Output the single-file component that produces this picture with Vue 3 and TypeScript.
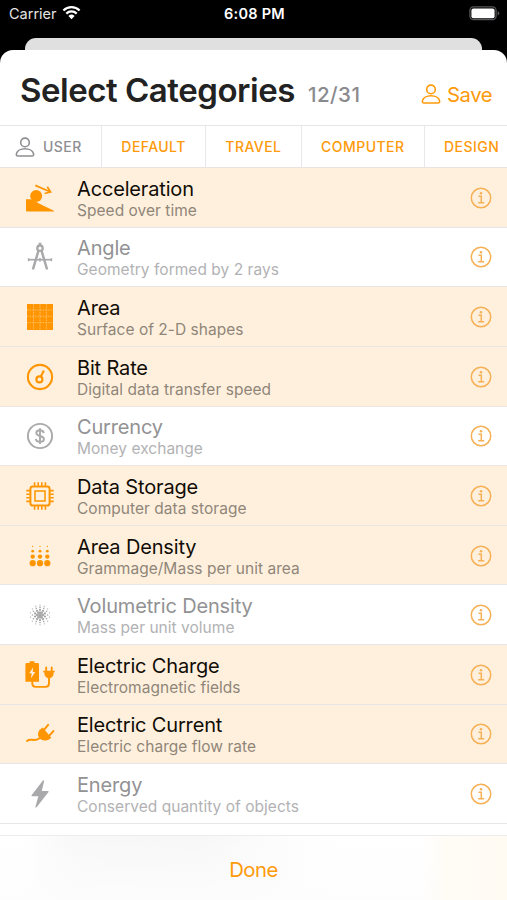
<script setup lang="ts">
interface Category {
  name: string
  detail: string
  icon: string
  selected: boolean
}

const categories: Category[] = [
  { name: 'Acceleration', detail: 'Speed over time', icon: 'acceleration', selected: true },
  { name: 'Angle', detail: 'Geometry formed by 2 rays', icon: 'angle', selected: false },
  { name: 'Area', detail: 'Surface of 2-D shapes', icon: 'area', selected: true },
  { name: 'Bit Rate', detail: 'Digital data transfer speed', icon: 'bitrate', selected: true },
  { name: 'Currency', detail: 'Money exchange', icon: 'currency', selected: false },
  { name: 'Data Storage', detail: 'Computer data storage', icon: 'chip', selected: true },
  { name: 'Area Density', detail: 'Grammage/Mass per unit area', icon: 'areadensity', selected: true },
  { name: 'Volumetric Density', detail: 'Mass per unit volume', icon: 'volumetric', selected: false },
  { name: 'Electric Charge', detail: 'Electromagnetic fields', icon: 'charge', selected: true },
  { name: 'Electric Current', detail: 'Electric charge flow rate', icon: 'current', selected: true },
  { name: 'Energy', detail: 'Conserved quantity of objects', icon: 'energy', selected: false },
]

const presets: string[] = ['DEFAULT', 'TRAVEL', 'COMPUTER', 'DESIGN']

interface Dot { x: number; y: number; r: number }

// Rings of dots that shrink away from the centre.
const cloud: Dot[] = [{ x: 16, y: 16, r: 1.9 }]
const rings = [
  { d: 2.8, n: 6, r: 1.45 },
  { d: 5.2, n: 10, r: 1.15 },
  { d: 7.6, n: 12, r: 0.8 },
  { d: 9.8, n: 14, r: 0.6 },
]
rings.forEach((ring, k) => {
  for (let i = 0; i < ring.n; i++) {
    const a = ((i + k * 0.5) / ring.n) * Math.PI * 2
    cloud.push({ x: 16 + Math.cos(a) * ring.d, y: 16 + Math.sin(a) * ring.d, r: ring.r })
  }
})

const columns = [8.7, 16, 23.3]
const levels = [
  { y: 6.4, r: 0.7 },
  { y: 11.2, r: 1.4 },
  { y: 16.6, r: 2.2 },
  { y: 23.2, r: 3.1 },
]
const pins = [10.6, 14.2, 17.8, 21.4]
</script>

<template>
  <div class="screen">
    <header class="status">
      <div class="carrier">
        <span>Carrier</span>
        <svg class="wifi" viewBox="0 0 19 15">
          <path d="M1.4 5.5a11.6 11.6 0 0 1 16.2 0" />
          <path d="M4.3 8.6a7.4 7.4 0 0 1 10.4 0" />
          <path class="solid" d="M6.4 11a4.5 4.5 0 0 1 6.2 0l-3.1 3.2z" />
        </svg>
      </div>
      <div class="clock">6:08 PM</div>
      <div class="power">
        <svg class="battery" viewBox="0 0 31 15">
          <rect x="0.9" y="0.9" width="26.2" height="12.8" rx="3.6" fill="none" stroke="#55555a" stroke-width="1.3" />
          <rect x="2.4" y="2.4" width="23.2" height="9.8" rx="2" fill="#fff" />
          <path d="M28.6 5v4.6q1.8-.7 1.8-2.3t-1.8-2.3z" fill="#55555a" />
        </svg>
      </div>
    </header>
    <div class="behind"></div>

    <main class="sheet">
      <div class="title-bar">
        <h1>Select Categories</h1>
        <span class="count">12/31</span>
        <button class="save">
          <svg class="person" viewBox="0 0 20 20">
            <circle cx="10" cy="5.4" r="4.3" />
            <path d="M3.2 19h13.6q2.2 0 1.8-2.1c-.7-3-4.3-5.1-8.6-5.1s-7.9 2.1-8.6 5.1q-.4 2.1 1.8 2.1z" />
          </svg>
          <span>Save</span>
        </button>
      </div>

      <nav class="tabs">
        <button class="tab user">
          <svg class="person" viewBox="0 0 20 20">
            <circle cx="10" cy="5.4" r="4.3" />
            <path d="M3.2 19h13.6q2.2 0 1.8-2.1c-.7-3-4.3-5.1-8.6-5.1s-7.9 2.1-8.6 5.1q-.4 2.1 1.8 2.1z" />
          </svg>
          <span>USER</span>
        </button>
        <button v-for="p in presets" :key="p" class="tab">{{ p }}</button>
      </nav>

      <ul class="list">
        <li v-for="c in categories" :key="c.name" class="row" :class="{ selected: c.selected }">
          <svg class="glyph" viewBox="0 0 32 32">
            <template v-if="c.icon === 'acceleration'">
              <circle cx="12.2" cy="14" r="6" fill="currentColor" />
              <path d="M2 17.2h5l12 6.4L30 28.8q.4.7-.5.7H3q-1 0-1-1z" fill="currentColor" />
              <path d="M11.3 3.4 26 9.8M23.3 4.7l3.3 5.3-6 1.5" fill="none" stroke="currentColor" stroke-width="1.7" />
            </template>
            <g v-else-if="c.icon === 'angle'" fill="none" stroke="currentColor">
              <circle cx="16" cy="7.2" r="2.7" stroke-width="2.3" />
              <path d="M16 1.7v3" stroke-width="2.6" />
              <path d="M14.4 10 8.9 28.5M17.6 10l5.5 18.5" stroke-width="2.5" />
              <path d="M4.5 18.7h23" stroke-width="1.7" />
              <path d="M4.5 17.2v3M27.5 17.2v3M16 16.7v4" stroke-width="1.3" />
            </g>
            <template v-else-if="c.icon === 'area'">
              <path d="M3 3h26v26H3z" fill="currentColor" />
              <path d="M9.6 3v26M16 3v26M22.4 3v26M3 9h26M3 15.3h26M3 21.6h26" stroke="#ffc777" stroke-width=".8" stroke-dasharray="1.6 1" fill="none" />
            </template>
            <g v-else-if="c.icon === 'bitrate'" fill="none" stroke="currentColor">
              <circle cx="16" cy="16" r="12.1" stroke-width="2.1" />
              <circle cx="15.4" cy="18.4" r="3" stroke-width="2.2" />
              <path d="m16.7 15.8 3.2-6.2" stroke-width="2.1" />
            </g>
            <g v-else-if="c.icon === 'currency'" fill="none" stroke="currentColor">
              <circle cx="16" cy="16" r="12.1" stroke-width="1.9" />
              <path d="M19.7 13.1c-.2-1.9-1.6-2.9-3.7-2.9s-3.7 1-3.7 2.8c0 4 7.6 2 7.6 6 0 1.9-1.6 2.9-3.9 2.9s-3.9-1-4.1-3M16 8.3v15.6" stroke-width="1.9" />
            </g>
            <g v-else-if="c.icon === 'chip'" fill="none" stroke="currentColor">
              <rect x="6.4" y="6.4" width="19.2" height="19.2" rx="2.4" stroke-width="2" />
              <rect x="11" y="11" width="10" height="10" stroke-width="1.5" />
              <path v-for="p in pins" :key="p" :d="`M${p} 2.3v3.5M${p} 26.2v3.5M2.3 ${p}h3.5M26.2 ${p}h3.5`" stroke-width="1.6" />
            </g>
            <g v-else-if="c.icon === 'areadensity'" fill="currentColor">
              <template v-for="x in columns" :key="x">
                <circle v-for="l in levels" :key="l.y" :cx="x" :cy="l.y" :r="l.r" />
              </template>
            </g>
            <g v-else-if="c.icon === 'volumetric'" fill="currentColor">
              <circle v-for="(d, i) in cloud" :key="i" :cx="d.x" :cy="d.y" :r="d.r" />
            </g>
            <template v-else-if="c.icon === 'charge'">
              <path fill-rule="evenodd" d="M5.5 2.3h5v1.8h3.2q1.3 0 1.3 1.3v17.3H1.4V5.4q0-1.3 1.3-1.3h2.8zM9.3 8.3 5.2 14.2h2.5L7 19.2l4.2-6.2H8.7z" fill="currentColor" />
              <path d="M8.3 22v2.6q0 3.3 3.3 3.3h10q3.4 0 3.4-3.3V18" fill="none" stroke="currentColor" stroke-width="1.9" />
              <path d="M19.2 11.7h11.5v1.6h-1q.1 5.6-4.7 6.2-4.8-.6-4.7-6.2h-1.1z" fill="currentColor" />
              <path d="M22.2 8.4v4M27.7 8.4v4" stroke="currentColor" stroke-width="1.9" stroke-linecap="round" />
            </template>
            <template v-else-if="c.icon === 'current'">
              <path d="m18.6 9.4 8.8 10.4q-3 3.1-7 2.7-3.3-.2-5.200-2.400-2.200-2.800-.9-5.900 1.100-2.900 4.300-4.800z" fill="currentColor" />
              <path d="m20.400 11.300 3.700-4.500M25.500 17.400l3.900-4.300" stroke="currentColor" stroke-width="2" stroke-linecap="round" />
              <path d="M3 22.900c4-3.500 6.300 1.600 12.500-2.700" fill="none" stroke="currentColor" stroke-width="2" stroke-linecap="round" />
            </template>
            <path v-else d="M18.9 2.5 7.6 17.2q-.5 1 .6 1.1h6.1l-2.9 10.6q.1 1.2 1.2.3L24.5 14q.5-1-.6-1.1h-6.1l2.3-9.8q-.1-1.2-1.2-.6z" fill="currentColor" />
          </svg>
          <div class="labels">
            <div class="name">{{ c.name }}</div>
            <div class="detail">{{ c.detail }}</div>
          </div>
          <svg class="info" viewBox="0 0 22 22">
            <circle cx="11" cy="11" r="9.7" />
            <path d="M8.5 9.3h2.8v6.2M8.2 15.7h6" />
            <circle class="tittle" cx="11" cy="6.2" r="1.25" />
          </svg>
        </li>
      </ul>
    </main>

    <footer class="dock">
      <button class="done">Done</button>
    </footer>
  </div>
</template>

<style>
body {
  margin: 0;
  background: #000;
}
</style>

<style scoped>
.screen {
  width: 507px;
  height: 900px;
  overflow: hidden;
  display: flex;
  flex-direction: column;
  background: #000;
  font-family: Inter, "Liberation Sans", sans-serif;
}
button {
  border: 0;
  padding: 0;
  background: none;
  font: inherit;
  color: #ff9a0a;
}
.status {
  height: 38px;
  flex: none;
  box-sizing: border-box;
  padding: 0 7px 11px 9px;
  display: grid;
  grid-template-columns: 1fr auto 1fr;
  align-items: center;
  color: #fff;
  font-size: 14.5px;
}
.carrier {
  display: flex;
  align-items: center;
  gap: 5px;
  color: #e4e4e4;
}
.wifi {
  width: 19px;
  height: 15px;
  margin-top: -2px;
  fill: none;
  stroke: #fff;
  stroke-width: 2.2;
}
.wifi .solid {
  fill: #fff;
  stroke: none;
}
.clock {
  font-weight: 600;
  letter-spacing: 0.25px;
}
.power {
  display: flex;
  justify-content: flex-end;
}
.battery {
  width: 31px;
  height: 15px;
}
.behind {
  flex: none;
  height: 12px;
  margin: 0 25px;
  border-radius: 11px 11px 0 0;
  background: #e0e0e0;
}
.sheet {
  flex: 1;
  min-height: 0;
  overflow: hidden;
  border-radius: 13px 13px 0 0;
  background: #fff;
}
.title-bar {
  height: 75px;
  box-sizing: border-box;
  padding: 0 15px 0 20px;
  display: flex;
  align-items: baseline;
  line-height: 81px;
}
h1 {
  margin: 0;
  font-size: 33px;
  font-weight: 600;
  letter-spacing: -0.47px;
  color: #222;
}
.count {
  margin-left: 13px;
  font-size: 20.5px;
  font-weight: 500;
  letter-spacing: 0.5px;
  color: #8a8a8d;
}
.save {
  position: relative;
  top: 2px;
  margin-left: auto;
  display: flex;
  align-items: center;
  gap: 6px;
  font-size: 20.3px;
  letter-spacing: -0.5px;
}
.person {
  width: 20px;
  height: 20px;
  fill: none;
  stroke: currentColor;
  stroke-width: 1.6;
}
.tabs {
  display: flex;
  height: 43px;
  width: 540px;
  box-sizing: border-box;
  border-top: 1px solid #e6e6e8;
  border-bottom: 1px solid #e8e3de;
}
.tab {
  flex: none;
  padding: 0 19.3px;
  border-right: 1px solid #e8e8ea;
  display: flex;
  align-items: center;
  font-size: 14px;
  font-weight: 500;
  letter-spacing: 0.45px;
}
.tab.user {
  gap: 8px;
  padding-left: 15px;
  color: #8e8e92;
}
.list {
  margin: 0;
  padding: 0;
  list-style: none;
}
.row {
  height: 59.64px;
  box-sizing: border-box;
  padding: 0 15px 0 24px;
  border-bottom: 1px solid #e8e5e4;
  display: flex;
  align-items: center;
  color: #a9a9ab;
}
.row.selected {
  background: #fff0de;
  color: #ff9500;
}
.glyph {
  flex: none;
  width: 32px;
  height: 32px;
  margin-top: 1px;
}
.labels {
  flex: 1;
  margin-left: 21px;
  padding-top: 4px;
}
.name {
  font-size: 20px;
  line-height: 23px;
  letter-spacing: -0.16px;
  color: #929294;
}
.detail {
  font-size: 15.5px;
  line-height: 20px;
  letter-spacing: 0.03px;
  color: #b2b2b4;
}
.selected .name {
  color: #110d06;
}
.selected .detail {
  color: #8f8679;
}
.info {
  flex: none;
  width: 22px;
  height: 22px;
  margin-top: 1px;
  fill: none;
  stroke: #f6b055;
  stroke-width: 1.5;
}
.info .tittle {
  fill: #f6b055;
  stroke: none;
}
.dock {
  flex: none;
  height: 65px;
  box-sizing: border-box;
  border-top: 1px solid #ececec;
  display: flex;
  align-items: center;
  justify-content: center;
  background:
    linear-gradient(90deg, transparent 420px, #fffcf6 445px, #fffbf3),
    linear-gradient(180deg, transparent, rgba(253, 253, 254, 0.9)),
    linear-gradient(90deg, #fff 20px, #f8f8f9 75px, #f7f7f8 200px, #fdfdfd 290px, #fff 350px);
}
.done {
  font-size: 20.3px;
  letter-spacing: -0.5px;
  padding-top: 3px;
}
</style>
